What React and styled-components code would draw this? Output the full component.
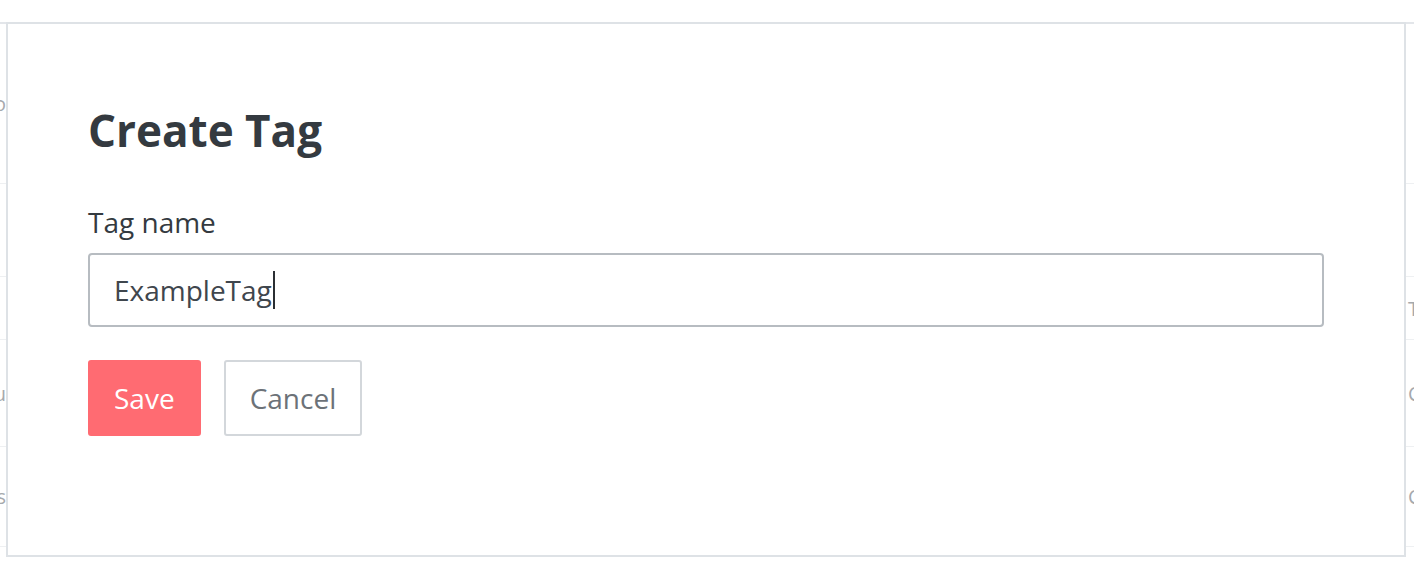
import React from "react";
import styled, { createGlobalStyle } from "styled-components";

const GlobalStyle = createGlobalStyle`
  html, body {
    margin: 0;
    padding: 0;
    background: #ffffff;
    font-family: "Open Sans", "Liberation Sans", sans-serif;
    overflow: hidden;
  }
`;

const Page = styled.div`
  position: relative;
  width: 1414px;
  height: 566px;
  padding-top: 22px;
  box-sizing: border-box;
  overflow: hidden;
`;

/* table behind the modal, only its edges show */
const Table = styled.div`
  border-top: 2px solid #e3e6ea;
`;

const Row = styled.div`
  display: grid;
  grid-template-columns: 6px 1fr 8px;
  align-items: center;
  height: ${(p) => p.h}px;
  border-bottom: 1px solid #eef0f2;
  font-size: 20px;
  color: #a6a9ad;
`;

const LeftCell = styled.div`
  display: flex;
  justify-content: flex-end;
  white-space: nowrap;
`;

const RightCell = styled.div`
  white-space: nowrap;
  padding-left: 2px;
`;

const Modal = styled.div`
  position: absolute;
  left: 6px;
  top: 22px;
  width: 1400px;
  height: 535px;
  box-sizing: border-box;
  background: #ffffff;
  border: 2px solid #dee2e6;
  padding: 79px 80px;
`;

const Title = styled.h2`
  margin: 0;
  font-size: 44px;
  line-height: 54px;
  font-weight: 700;
  color: #343a40;
`;

const Label = styled.label`
  display: block;
  margin-top: 44px;
  margin-bottom: 10px;
  font-size: 28px;
  line-height: 42px;
  color: #343a40;
`;

const Field = styled.div`
  display: flex;
  align-items: center;
  height: 74px;
  box-sizing: border-box;
  padding: 0 24px;
  border: 2px solid #b7bcc1;
  border-radius: 4px;
  font-size: 28px;
  color: #3f464d;
`;

const Caret = styled.span`
  display: inline-block;
  width: 2px;
  height: 38px;
  margin-left: 1px;
  background: #2b2f33;
`;

const Actions = styled.div`
  display: flex;
  gap: 23px;
  margin-top: 33px;
`;

const Button = styled.button`
  height: 76px;
  padding: 0 24px;
  box-sizing: border-box;
  font-family: inherit;
  font-size: 28px;
  line-height: 42px;
  border-radius: 3px;
  border: 2px solid ${(p) => (p.primary ? "#ff6b72" : "#d3d7db")};
  background: ${(p) => (p.primary ? "#ff6b72" : "#ffffff")};
  color: ${(p) => (p.primary ? "#ffffff" : "#6c7278")};
  cursor: pointer;
`;

const rows = [
  { h: 159, left: "Info", right: "" },
  { h: 92, left: "", right: "" },
  { h: 62, left: "", right: "Tags" },
  { h: 106, left: "Menu", right: "Code" },
  { h: 99, left: "Posts", right: "Core" },
  { h: 40, left: "", right: "" },
];

export default function App() {
  return (
    <Page>
      <GlobalStyle />
      <Table>
        {rows.map((r, i) => (
          <Row key={i} h={r.h}>
            <LeftCell>{r.left}</LeftCell>
            <div />
            <RightCell>{r.right}</RightCell>
          </Row>
        ))}
      </Table>
      <Modal>
        <Title>Create Tag</Title>
        <Label>Tag name</Label>
        <Field>
          ExampleTag
          <Caret />
        </Field>
        <Actions>
          <Button primary>Save</Button>
          <Button>Cancel</Button>
        </Actions>
      </Modal>
    </Page>
  );
}
